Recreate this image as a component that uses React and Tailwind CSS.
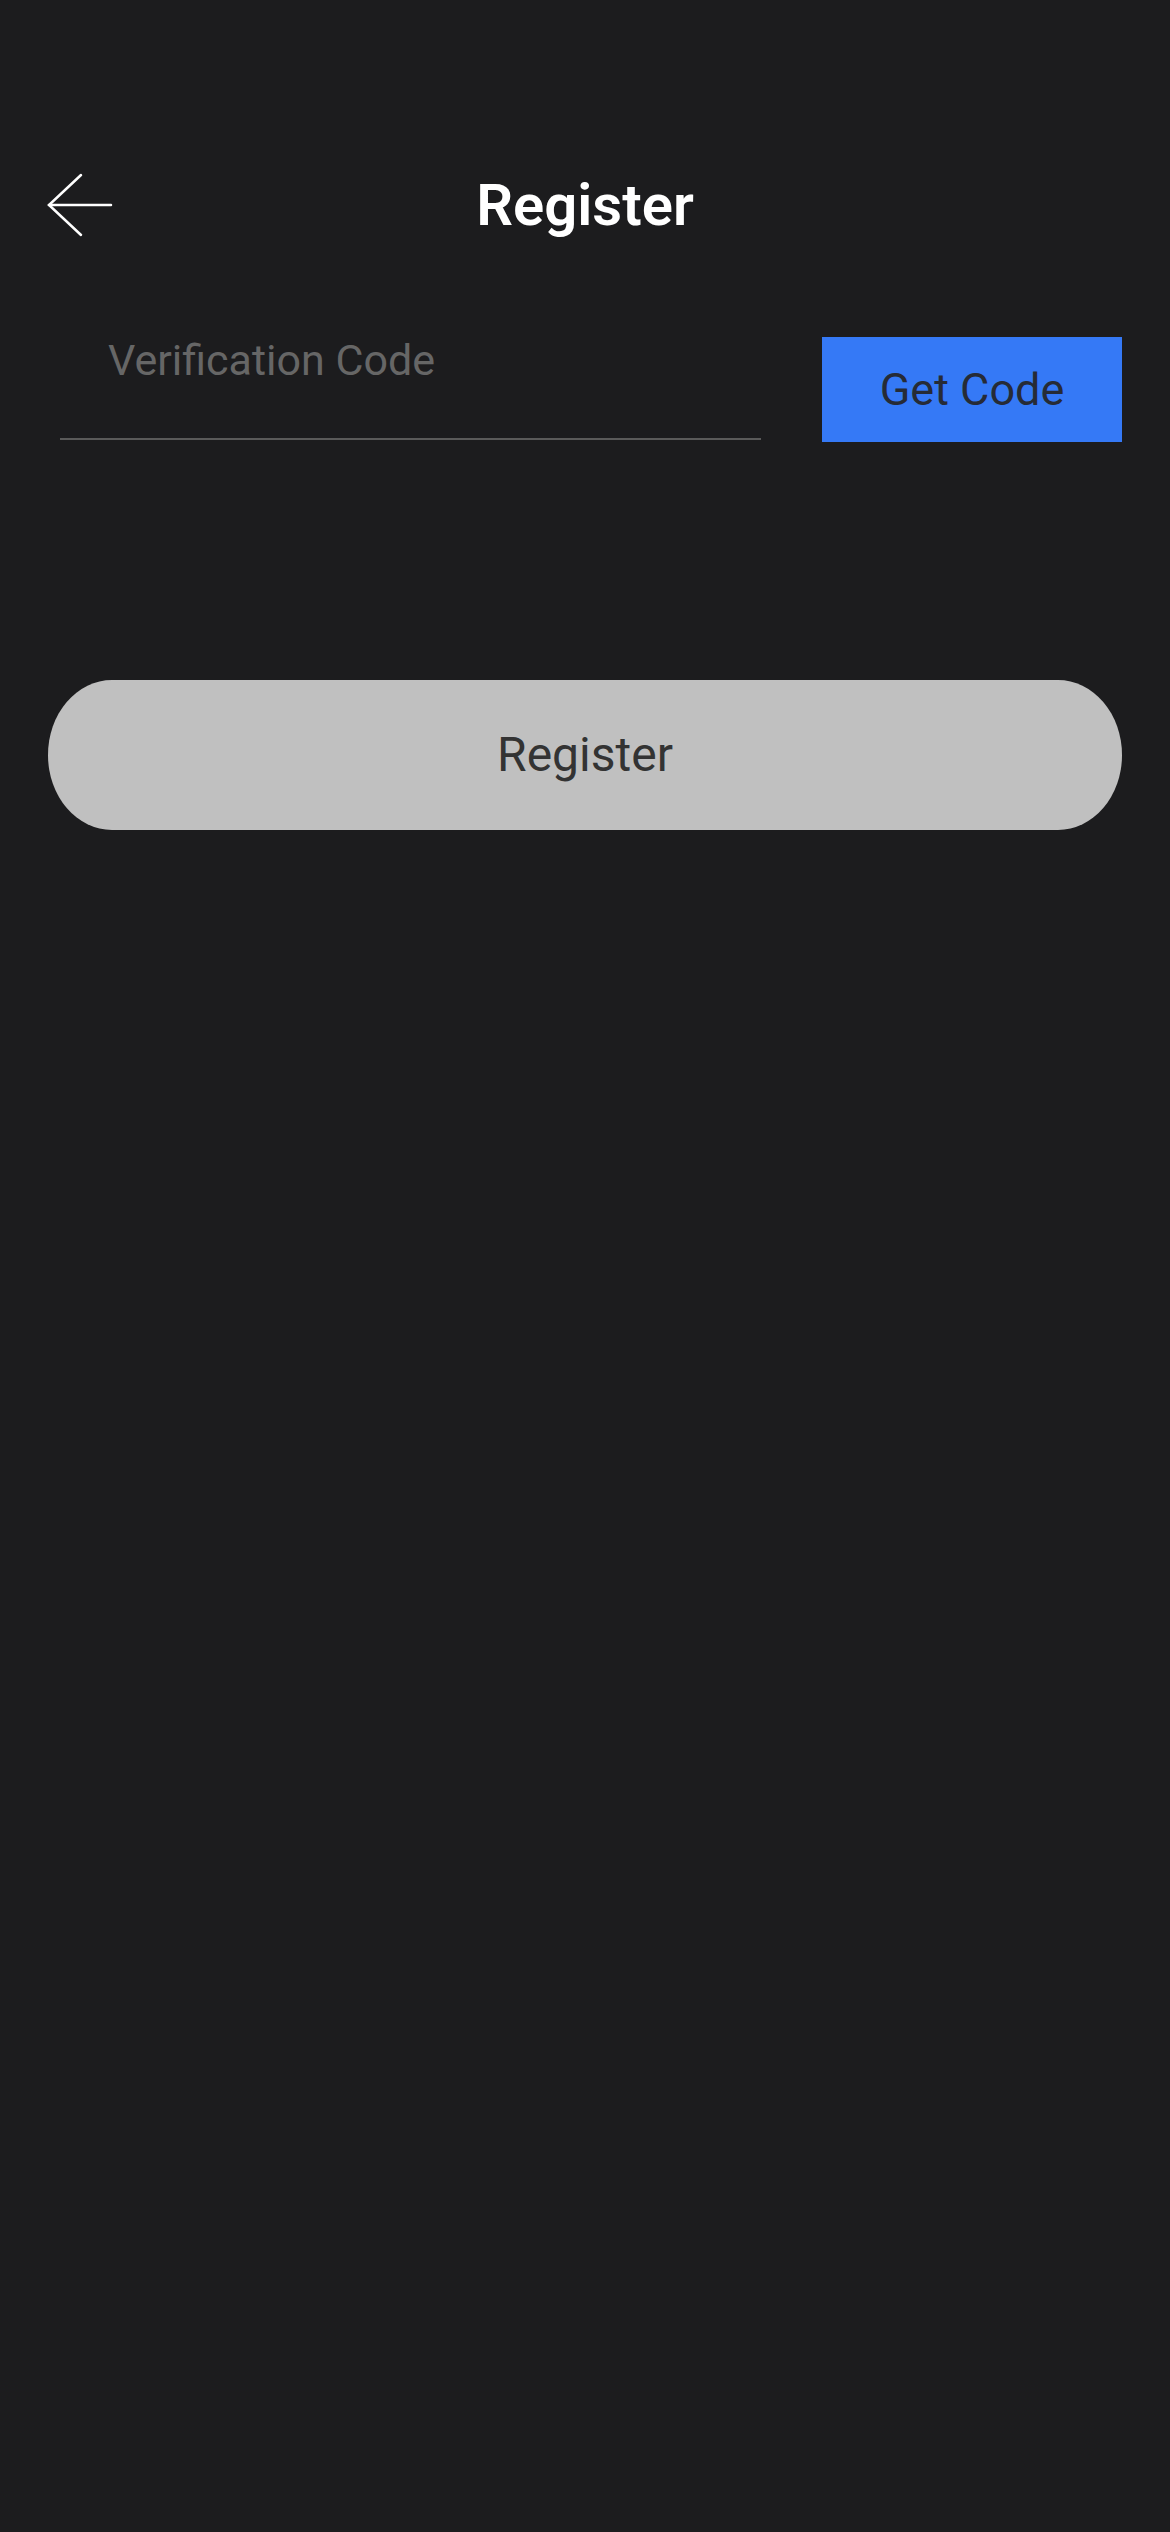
import React from "react";

function BackArrow() {
  return (
    <svg width="66" height="66" viewBox="0 0 66 66" fill="none" stroke="#ffffff" strokeWidth="2.5" strokeLinecap="round">
      <path d="M64 33H2" />
      <path d="M34 3L2 33l32 30" />
    </svg>
  );
}

export default function App() {
  return (
    <div
      className="min-h-[2532px] w-full bg-[#1c1c1e] px-[48px] pt-[172px]"
      style={{ fontFamily: "Roboto, 'Noto Sans', sans-serif" }}
    >
      {/* Header */}
      <div className="relative flex h-[66px] items-center justify-center">
        <button className="absolute left-[-1px] top-0">
          <BackArrow />
        </button>
        <h1 className="text-[58px] font-semibold leading-none text-white">Register</h1>
      </div>

      {/* Code row */}
      <div className="mt-[97px] flex items-end gap-[61px]">
        <div className="ml-[12px] flex h-[105px] flex-1 border-b-2 border-[#5a5a5a] pl-[48px]">
          <input
            className="h-[50px] w-full bg-transparent text-[43px] text-white outline-none placeholder:text-[#666666]"
            placeholder="Verification Code"
          />
        </div>
        <button className="mb-[-2px] h-[105px] w-[300px] bg-[#3579f6] text-[45px] text-[#262b36]">
          Get Code
        </button>
      </div>

      {/* Register */}
      <button className="mt-[240px] h-[150px] w-full rounded-[64px_/_75px] bg-[#c0c0c0] text-[48px] text-[#333333]">
        Register
      </button>
    </div>
  );
}
